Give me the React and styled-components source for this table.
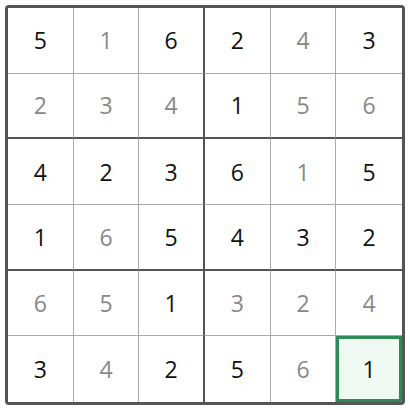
import React from "react";
import styled, { createGlobalStyle } from "styled-components";

const Global = createGlobalStyle`
  html, body { margin: 0; padding: 0; background: #fff; }
  body { font-family: "Open Sans", "Noto Sans", sans-serif; }
`;

const Page = styled.div`
  padding: 5px;
`;

const Board = styled.div`
  box-sizing: border-box;
  width: 400px;
  height: 400px;
  border: 3px solid #555;
  border-radius: 4px;
  display: grid;
  grid-template-columns: repeat(6, 1fr);
  grid-template-rows: repeat(6, 1fr);
  overflow: hidden;
`;

const Cell = styled.div`
  box-sizing: border-box;
  display: flex;
  align-items: center;
  justify-content: center;
  font-size: 23px;
  color: ${(p) => (p.$given ? "#111" : "#888")};
  background: ${(p) => (p.$selected ? "#effbf2" : "#fff")};
  border-right: ${(p) => (p.$col === 5 ? "none" : p.$col === 2 ? "2px solid #555" : "1px solid #aaa")};
  border-bottom: ${(p) => (p.$row === 5 ? "none" : p.$row % 2 === 1 ? "2px solid #555" : "1px solid #aaa")};
  box-shadow: ${(p) => (p.$selected ? "inset 0 0 0 3px #2e8b57" : "none")};
`;

const values = [
  [5, 1, 6, 2, 4, 3],
  [2, 3, 4, 1, 5, 6],
  [4, 2, 3, 6, 1, 5],
  [1, 6, 5, 4, 3, 2],
  [6, 5, 1, 3, 2, 4],
  [3, 4, 2, 5, 6, 1],
];

const given = [
  [1, 0, 1, 1, 0, 1],
  [0, 0, 0, 1, 0, 0],
  [1, 1, 1, 1, 0, 1],
  [1, 0, 1, 1, 1, 1],
  [0, 0, 1, 0, 0, 0],
  [1, 0, 1, 1, 0, 1],
];

export default function App() {
  return (
    <Page>
      <Global />
      <Board>
        {values.map((row, r) =>
          row.map((v, c) => (
            <Cell
              key={`${r}-${c}`}
              $row={r}
              $col={c}
              $given={given[r][c] === 1}
              $selected={r === 5 && c === 5}
            >
              {v}
            </Cell>
          ))
        )}
      </Board>
    </Page>
  );
}
